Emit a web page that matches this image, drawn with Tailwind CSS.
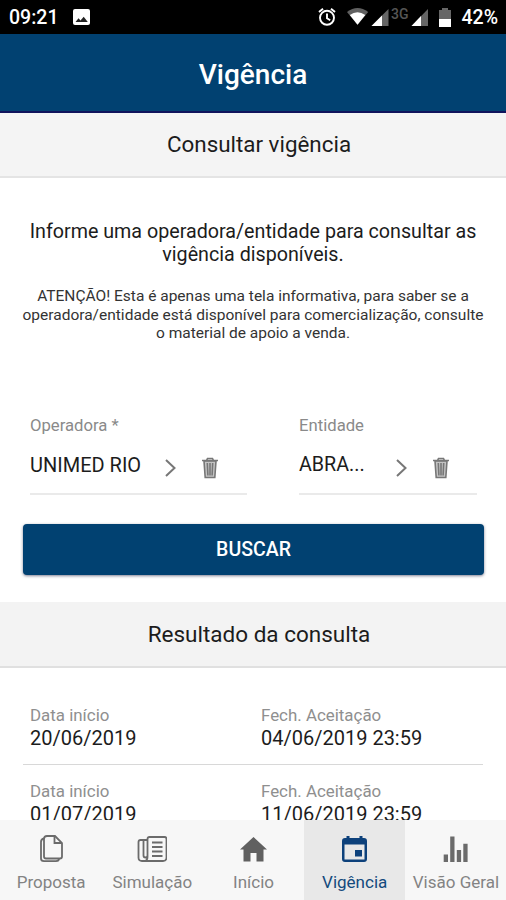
<!DOCTYPE html>
<html lang="pt-BR">
<head>
    <meta charset="UTF-8">
    <meta name="viewport" content="width=device-width, initial-scale=1.0">
    <title>Vigência</title>
    <script src="https://cdn.jsdelivr.net/npm/@tailwindcss/browser@4"></script>
</head>
<body class="bg-white font-['Roboto',sans-serif] text-[#1c1c1c]">
<div class="w-[506px] h-[900px] flex flex-col overflow-hidden">

    <!-- Status bar -->
    <div class="h-[34px] shrink-0 bg-black text-white flex items-center justify-between pl-[9px] pr-2">
        <div class="flex items-center">
            <span class="text-[19.500px] leading-[34px] font-medium w-[64px] whitespace-nowrap pt-0.5">09:21</span>
            <svg class="w-[17px] h-[16px]" viewBox="0 0 17 16">
                <rect width="17" height="16" rx="2" fill="#fff"/>
                <path d="M2.500 13 5.500 9.300 7.500 11.400 10.700 7.800 14.800 13Z" fill="#222"/>
            </svg>
        </div>
        <div class="flex items-center">
            <svg class="w-[118px] h-[20px]" viewBox="317.500 7.500 118 20">
                <g fill="none" stroke="#fff" stroke-width="1.900">
                    <circle cx="326.500" cy="18.300" r="7"/>
                    <path d="M326.500 14v4.800l3.200 2M318.500 12.500l4-3.300M334.500 12.500l-4-3.300"/>
                </g>
                <path d="M346.500 12.500Q357 4.500 367.700 12.500L357 25.300Z" fill="#606060"/>
                <path d="M349.300 15.500Q357 10 364.800 15.500L357 25.300Z" fill="#fff"/>
                <path d="M388 9.500V26.500H371Z" fill="#666"/>
                <path d="M381.500 16V26.500H371Z" fill="#fff"/>
                <text x="390.500" y="19.500" font-size="14" fill="#555" font-weight="500">3G</text>
                <path d="M427.500 9.500V26.500H411Z" fill="#666"/>
                <path d="M420.500 16.500V26.500H411Z" fill="#fff"/>
            </svg>
            <svg class="w-[12px] h-[19px] ml-[3px]" viewBox="0 0 12 19">
                <path d="M0 2h3V0h6v2h3v9H0Z" fill="#666"/>
                <path d="M0 11h12v8H0Z" fill="#fff"/>
            </svg>
            <span class="text-[19.500px] leading-[34px] font-medium ml-[10px] pt-0.5">42%</span>
        </div>
    </div>

    <!-- Header -->
    <header class="h-[79px] shrink-0 bg-[#014171] border-b-2 border-[#10145c] flex items-center justify-center">
        <h1 class="text-[28px] font-medium text-white pt-[5px]">Vigência</h1>
    </header>

    <!-- Consulta -->
    <h2 class="h-[65px] shrink-0 bg-[#f4f4f4] border-b-2 border-[#e4e4e4] flex items-center justify-center pl-3 text-[22.400px]">Consultar vigência</h2>
    <section class="h-[424px] shrink-0 px-[23px] pt-[42px]">
        <p class="text-center text-[19.700px] leading-[23px] whitespace-nowrap">Informe uma operadora/entidade para consultar as<br>vigência disponíveis.</p>
        <p class="-mx-2 text-center text-[15.500px] leading-[18.500px] mt-[21px] whitespace-nowrap text-[#333]">ATENÇÃO! Esta é apenas uma tela informativa, para saber se a<br>operadora/entidade está disponível para comercialização, consulte<br>o material de apoio a venda.</p>

        <div class="flex gap-[52px] pl-[7px] mt-[73px]">
            <div class="w-[217px] h-[79px] border-b-2 border-[#eaeaea]">
                <label class="block text-[16.700px] leading-5 text-[#8a8a8a]">Operadora *</label>
                <div class="flex items-center mt-[16px] h-[26px]">
                    <span class="w-[135px] text-[20px] whitespace-nowrap">UNIMED RIO</span>
                    <svg class="w-[11px] h-[18px] mt-1.5" viewBox="0 0 11 18" fill="none" stroke="#777" stroke-width="2"><path d="M1 1 9.500 9 1 17"/></svg>
                    <svg class="w-[16px] h-[22px] ml-[26px] mt-1.5" viewBox="0 0 16 22" fill="none" stroke="#777" stroke-width="1.600"><path fill="#c4c4c4" d="M2 4 3.200 20.500h9.600L14 4Z"/><path d="M0 3.500h16M4.500 3.500 5.500 1.500h5l1 2M5.300 6 5.900 18.500M8 6V18.500M10.700 6 10.100 18.500"/></svg>
                </div>
            </div>
            <div class="w-[178px] h-[79px] border-b-2 border-[#eaeaea]">
                <label class="block text-[16.700px] leading-5 text-[#8a8a8a]">Entidade</label>
                <div class="flex items-center mt-[16px] h-[26px]">
                    <span class="w-[97px] text-[19.700px] pt-px">ABRA...</span>
                    <svg class="w-[11px] h-[18px] mt-1.5" viewBox="0 0 11 18" fill="none" stroke="#777" stroke-width="2"><path d="M1 1 9.500 9 1 17"/></svg>
                    <svg class="w-[16px] h-[22px] ml-[26px] mt-1.5" viewBox="0 0 16 22" fill="none" stroke="#777" stroke-width="1.600"><path fill="#c4c4c4" d="M2 4 3.200 20.500h9.600L14 4Z"/><path d="M0 3.500h16M4.500 3.500 5.500 1.500h5l1 2M5.300 6 5.900 18.500M8 6V18.500M10.700 6 10.100 18.500"/></svg>
                </div>
            </div>
        </div>

        <button class="w-[461px] h-[51px] pt-0.5 mt-[29px] bg-[#014171] text-white text-[19.500px] font-medium rounded-[4px] shadow-[0_1px_3px_rgba(0,0,40,0.5)]">BUSCAR</button>
    </section>

    <!-- Resultado -->
    <h2 class="h-[66px] shrink-0 bg-[#f3f3f3] border-b-2 border-[#e0e0e0] flex items-center justify-center pl-3 pt-0.5 text-[22.500px]">Resultado da consulta</h2>
    <section class="h-[152px] shrink-0 px-[23px] pt-[21px]">
        <div class="h-[76px] pl-[7px] pt-[15px] border-b border-[#d8d8d8] grid grid-cols-[231px_1fr]">
            <div>
                <p class="text-[16.900px] leading-[22px] text-[#8f8f8f]">Data início</p>
                <p class="text-[20px] leading-[23px] pt-px">20/06/2019</p>
            </div>
            <div>
                <p class="text-[16.900px] leading-[22px] text-[#8f8f8f]">Fech. Aceitação</p>
                <p class="text-[20px] leading-[23px] pt-px">04/06/2019 23:59</p>
            </div>
        </div>
        <div class="h-[76px] pl-[7px] pt-[15px] grid grid-cols-[231px_1fr]">
            <div>
                <p class="text-[16.900px] leading-[22px] text-[#8f8f8f]">Data início</p>
                <p class="text-[20px] leading-[23px] pt-px">01/07/2019</p>
            </div>
            <div>
                <p class="text-[16.900px] leading-[22px] text-[#8f8f8f]">Fech. Aceitação</p>
                <p class="text-[20px] leading-[23px] pt-px">11/06/2019 23:59</p>
            </div>
        </div>
    </section>

    <!-- Tabs -->
    <nav class="flex-1 grid grid-cols-5 bg-[#f7f7f7] text-[17px] text-[#838383]">
        <a class="flex flex-col items-center pt-[14px]">
            <svg class="w-[30px] h-[30px]" viewBox="0 0 30 30" fill="none" stroke="#6b6b6b" stroke-width="1.800">
                <path d="M11 2h8l7 7v13.500q0 2-2 2H10q-2 0-2-2V5q0-3 3-3Z"/>
                <path d="M18.500 2v7h7M8 4.500q-3 .5-3 3.500v16.500q0 2.700 3 2.700h12q3 0 3-2.700"/>
            </svg>
            <span class="leading-[22px] mt-[7px] pl-px">Proposta</span>
        </a>
        <a class="flex flex-col items-center pt-[14px]">
            <svg class="w-[30px] h-[30px]" viewBox="0 0 30 30" fill="none" stroke="#6b6b6b" stroke-width="1.800">
                <path d="M10.500 23V5q0-2 2-2h15q2 0 2 2v18.500q0 3.500-3.500 3.500H5q-3.500 0-3.500-3.500V8q0-2 2-2h7M6.500 6v15.500q0 2 2 2t2-2M10.500 23q0 4-3.500 4"/>
                <path d="M15 8.500h10.500M15 13h10.500M15 17.500h10.500M15 22h10.500" stroke-width="2"/>
            </svg>
            <span class="leading-[22px] mt-[7px] pl-px">Simulação</span>
        </a>
        <a class="flex flex-col items-center pt-[14px]">
            <svg class="w-[30px] h-[30px]" viewBox="0 0 30 30" fill="#606060">
                <path d="M15.500 3 29 15.500H25.500V27.500H18.500V19h-6v8.500H5.500V15.500H2Z"/>
            </svg>
            <span class="leading-[22px] mt-[7px] pl-px">Início</span>
        </a>
        <a class="flex flex-col items-center pt-[14px] bg-[#e8e8e8] text-[#124a7d]">
            <svg class="w-[30px] h-[30px]" viewBox="0 0 30 30">
                <path fill="#0d417b" fill-rule="evenodd" d="M6 4H7.500V2h3v2h10V2h3v2h1.500q3 0 3 3V25q0 3-3 3H6q-3 0-3-3V7q0-3 3-3ZM5.500 10.500V25.500h20v-15Z"/>
                <path fill="#0d417b" d="M16 16h7v6.500h-7Z"/>
            </svg>
            <span class="leading-[22px] mt-[7px] pl-px">Vigência</span>
        </a>
        <a class="flex flex-col items-center pt-[14px]">
            <svg class="w-[30px] h-[30px]" viewBox="0 0 30 30" fill="#6b6b6b">
                <path d="M3.700 20.500h4.300v7.500H3.700ZM10.200 2.500h4.300V28h-4.300ZM16.800 16h4.300V28h-4.300ZM23.300 9.800h4.300V28h-4.300Z"/>
            </svg>
            <span class="leading-[22px] mt-[7px] pl-px whitespace-nowrap">Visão Geral</span>
        </a>
    </nav>
</div>
</body>
</html>
